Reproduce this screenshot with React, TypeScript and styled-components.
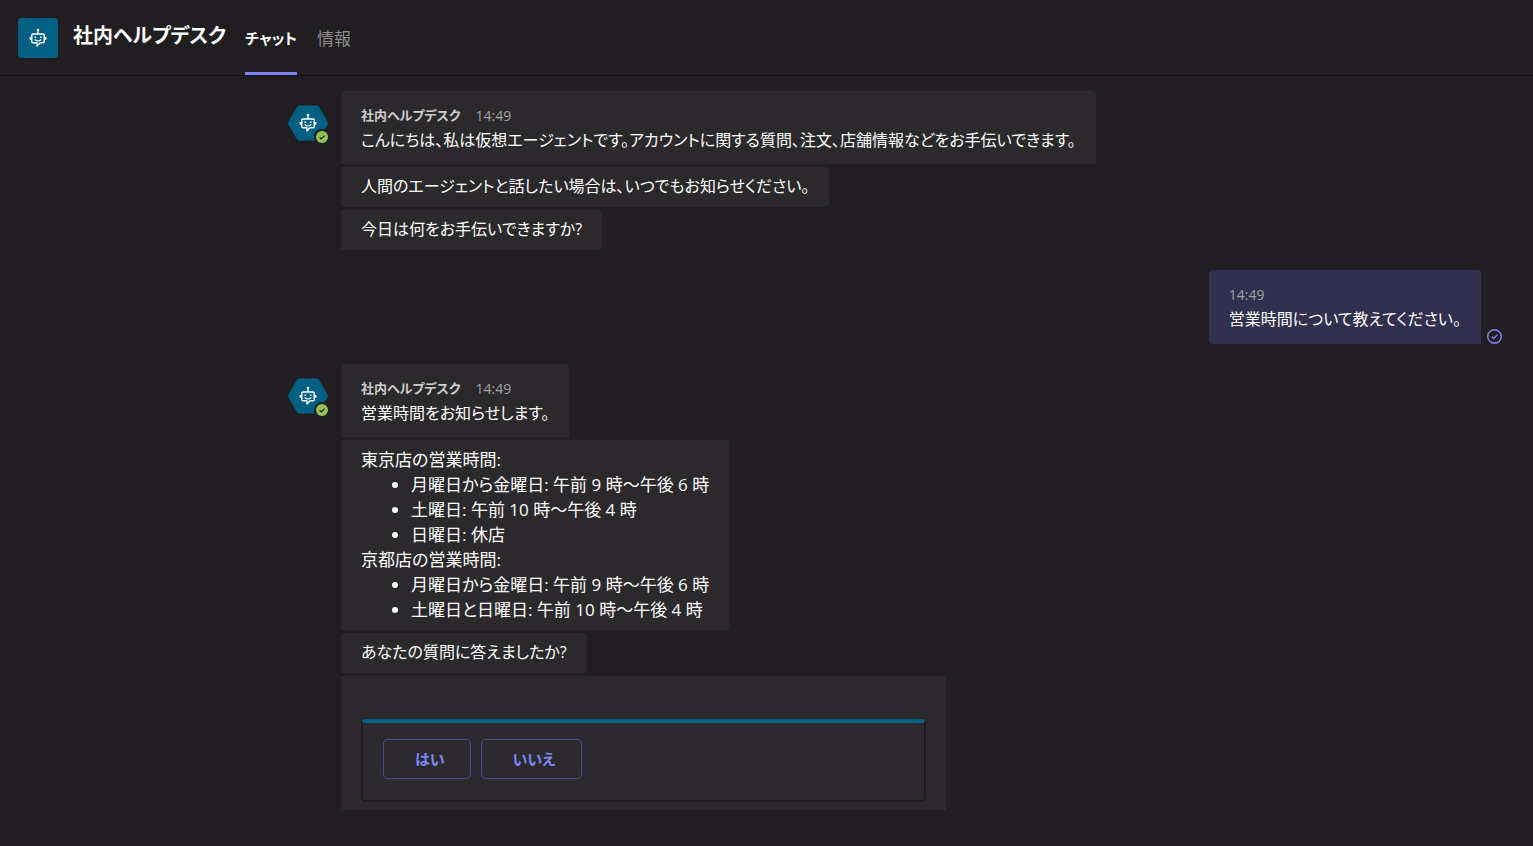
import React from "react";
import styled, { createGlobalStyle, css } from "styled-components";

const GlobalStyle = createGlobalStyle`
  *, *::before, *::after { box-sizing: border-box; }
  body {
    margin: 0;
    background: #201e20;
    color: #ffffff;
    font-family: "Open Sans", "Noto Sans CJK JP", sans-serif;
    font-size: 16px;
    line-height: 25px;
    font-feature-settings: "palt";
  }
  h1, p, ul { margin: 0; padding: 0; font: inherit; }
`;

const Page = styled.div`
  display: flex;
  flex-direction: column;
  min-height: 100vh;
`;

const Header = styled.header`
  display: flex;
  align-items: stretch;
  height: 76px;
  padding-left: 18px;
  border-bottom: 1px solid #151315;
`;

const AppIcon = styled.div`
  align-self: center;
  display: grid;
  place-items: center;
  width: 40px;
  height: 40px;
  border-radius: 4px;
  background: #006083;
`;

const Title = styled.h1`
  && {
    align-self: center;
    margin: 0 19px 4px 15px;
    font-size: 20px;
    font-weight: 700;
    line-height: 30px;
    white-space: nowrap;
  }
`;

const Tabs = styled.nav`
  display: flex;
  gap: 20px;
`;

const Tab = styled.a<{ $active?: boolean }>`
  display: flex;
  align-items: center;
  padding-top: 5px;
  border-bottom: 3px solid ${(p) => (p.$active ? "#7f85f5" : "transparent")};
  color: ${(p) => (p.$active ? "#ffffff" : "#8f8d8f")};
  font-size: ${(p) => (p.$active ? "15px" : "17px")};
  font-weight: ${(p) => (p.$active ? 700 : 400)};
  text-decoration: none;
  white-space: nowrap;
`;

const Conversation = styled.main`
  display: flex;
  flex-direction: column;
  gap: 20px;
  padding: 15px 31px 35px 288px;
`;

const BotTurn = styled.section`
  display: flex;
  align-items: flex-start;
  gap: 13px;
`;

const UserTurn = styled.section`
  display: flex;
  justify-content: flex-end;
  align-items: flex-end;
  gap: 6px;
`;

const Avatar = styled.div`
  position: relative;
  flex: none;
  width: 40px;
  height: 36px;
  margin-top: 14px;
`;

const Presence = styled.svg`
  position: absolute;
  right: -2px;
  bottom: -4px;
`;

const Stack = styled.div`
  display: flex;
  flex-direction: column;
  align-items: flex-start;
  gap: 3px;
  min-width: 0;
`;

const Bubble = styled.div<{ $kind?: "lead" | "user" | "card" }>`
  padding: 7px 20px 8px;
  border-radius: 0 4px 4px 0;
  background: #2b292c;
  ${(p) => p.$kind === "lead" && css`
    padding: 12px 20px 11px;
    border-radius: 4px 4px 0 0;
  `}
  ${(p) => p.$kind === "user" && css`
    padding: 12px 20px;
    border-radius: 4px 4px 0 4px;
    background: #31304f;
  `}
  ${(p) => p.$kind === "card" && css`
    width: 605px;
    max-width: 100%;
    padding: 43px 20px 8px;
    border-radius: 0 4px 0 4px;
  `}
`;

const Meta = styled.div`
  display: flex;
  gap: 15px;
  font-size: 14px;
  color: #a3a1a3;
`;

const Sender = styled.span`
  font-size: 13px;
  font-weight: 700;
  color: #cfcdcf;
`;

const Schedule = styled.div`
  font-size: 17px;
`;

const Hours = styled.ul`
  && { padding-left: 50px; }
`;

const Card = styled.div`
  display: flex;
  flex-wrap: wrap;
  gap: 10px;
  padding: 16px 20px 21px;
  border: 2px solid #1d1b1d;
  border-top: 4px solid #086082;
  border-radius: 4px;
`;

const Choice = styled.button`
  height: 40px;
  padding: 0 25px 0 31px;
  border: 1px solid #444a8c;
  border-radius: 4px;
  background: transparent;
  color: #7f85f5;
  font: inherit;
  font-size: 15px;
  font-weight: 700;
  font-feature-settings: inherit;
  cursor: pointer;
`;

const BotGlyph = () => (
  <svg width="18" height="20" viewBox="0 0 18 20" fill="none" stroke="#fff" strokeWidth="1.4" aria-hidden="true">
    <path d="M3.8 6h10.400a1 1 0 0 1 1 1v6.800a1 1 0 0 1-1 1H11L8 18v-3.200H3.800a1 1 0 0 1-1-1V7a1 1 0 0 1 1-1z" strokeLinejoin="round" />
    <path d="M9 6V2.500M1.300 9v2.800M16.700 9v2.800" />
    <circle cx="9" cy="2" r="1.300" fill="#fff" stroke="none" />
    <circle cx="6.300" cy="9.200" r="0.900" fill="#fff" stroke="none" />
    <circle cx="11.700" cy="9.200" r="0.900" fill="#fff" stroke="none" />
    <path d="M5.700 11.500c1.900 1.700 4.700 1.700 6.600 0" strokeWidth="1.100" />
  </svg>
);

const BotAvatar = () => (
  <Avatar>
    <svg width="40" height="36" viewBox="0 0 40 36" aria-hidden="true">
      <path d="M11.500 0.500h17q1.800 0 2.700 1.500l8.300 14.500q.9 1.500 0 3L31.200 34q-.9 1.500-2.700 1.500h-17q-1.800 0-2.700-1.500L.5 19.500q-.9-1.500 0-3L8.800 2q.9-1.500 2.700-1.500z" fill="#006083" />
      <g transform="translate(11 8)"><BotGlyph /></g>
    </svg>
    <Presence width="16" height="16" viewBox="0 0 16 16" aria-hidden="true">
      <circle cx="8" cy="8" r="8" fill="#201e20" />
      <circle cx="8" cy="8" r="6" fill="#92c353" />
      <path d="M5.600 8.200l1.700 1.600 3.200-3.200" fill="none" stroke="#201e20" strokeWidth="1.200" />
    </Presence>
  </Avatar>
);

const SentMark = () => (
  <svg width="15" height="15" viewBox="0 0 15 15" fill="none" stroke="#7f85f5" strokeWidth="1.400" role="img" aria-label="送信済み">
    <circle cx="7.500" cy="7.500" r="6.800" />
    <path d="M4.800 7.700l1.800 1.700 3.700-3.700" />
  </svg>
);

const BotMeta = () => (
  <Meta><Sender>社内ヘルプデスク</Sender><time>14:49</time></Meta>
);

export default function App() {
  return (
    <Page>
      <GlobalStyle />
      <Header>
        <AppIcon><BotGlyph /></AppIcon>
        <Title>社内ヘルプデスク</Title>
        <Tabs>
          <Tab href="#chat" $active aria-current="page">チャット</Tab>
          <Tab href="#about">情報</Tab>
        </Tabs>
      </Header>
      <Conversation>
        <BotTurn>
          <BotAvatar />
          <Stack>
            <Bubble $kind="lead">
              <BotMeta />
              <p>こんにちは、私は仮想エージェントです。アカウントに関する質問、注文、店舗情報などをお手伝いできます。</p>
            </Bubble>
            <Bubble><p>人間のエージェントと話したい場合は、いつでもお知らせください。</p></Bubble>
            <Bubble><p>今日は何をお手伝いできますか?</p></Bubble>
          </Stack>
        </BotTurn>
        <UserTurn>
          <Bubble $kind="user">
            <Meta><time>14:49</time></Meta>
            <p>営業時間について教えてください。</p>
          </Bubble>
          <SentMark />
        </UserTurn>
        <BotTurn>
          <BotAvatar />
          <Stack>
            <Bubble $kind="lead">
              <BotMeta />
              <p>営業時間をお知らせします。</p>
            </Bubble>
            <Bubble>
              <Schedule>
                <p>東京店の営業時間:</p>
                <Hours>
                  <li>月曜日から金曜日: 午前 9 時～午後 6 時</li>
                  <li>土曜日: 午前 10 時～午後 4 時</li>
                  <li>日曜日: 休店</li>
                </Hours>
                <p>京都店の営業時間:</p>
                <Hours>
                  <li>月曜日から金曜日: 午前 9 時～午後 6 時</li>
                  <li>土曜日と日曜日: 午前 10 時～午後 4 時</li>
                </Hours>
              </Schedule>
            </Bubble>
            <Bubble><p>あなたの質問に答えましたか?</p></Bubble>
            <Bubble $kind="card">
              <Card>
                <Choice type="button">はい</Choice>
                <Choice type="button">いいえ</Choice>
              </Card>
            </Bubble>
          </Stack>
        </BotTurn>
      </Conversation>
    </Page>
  );
}
